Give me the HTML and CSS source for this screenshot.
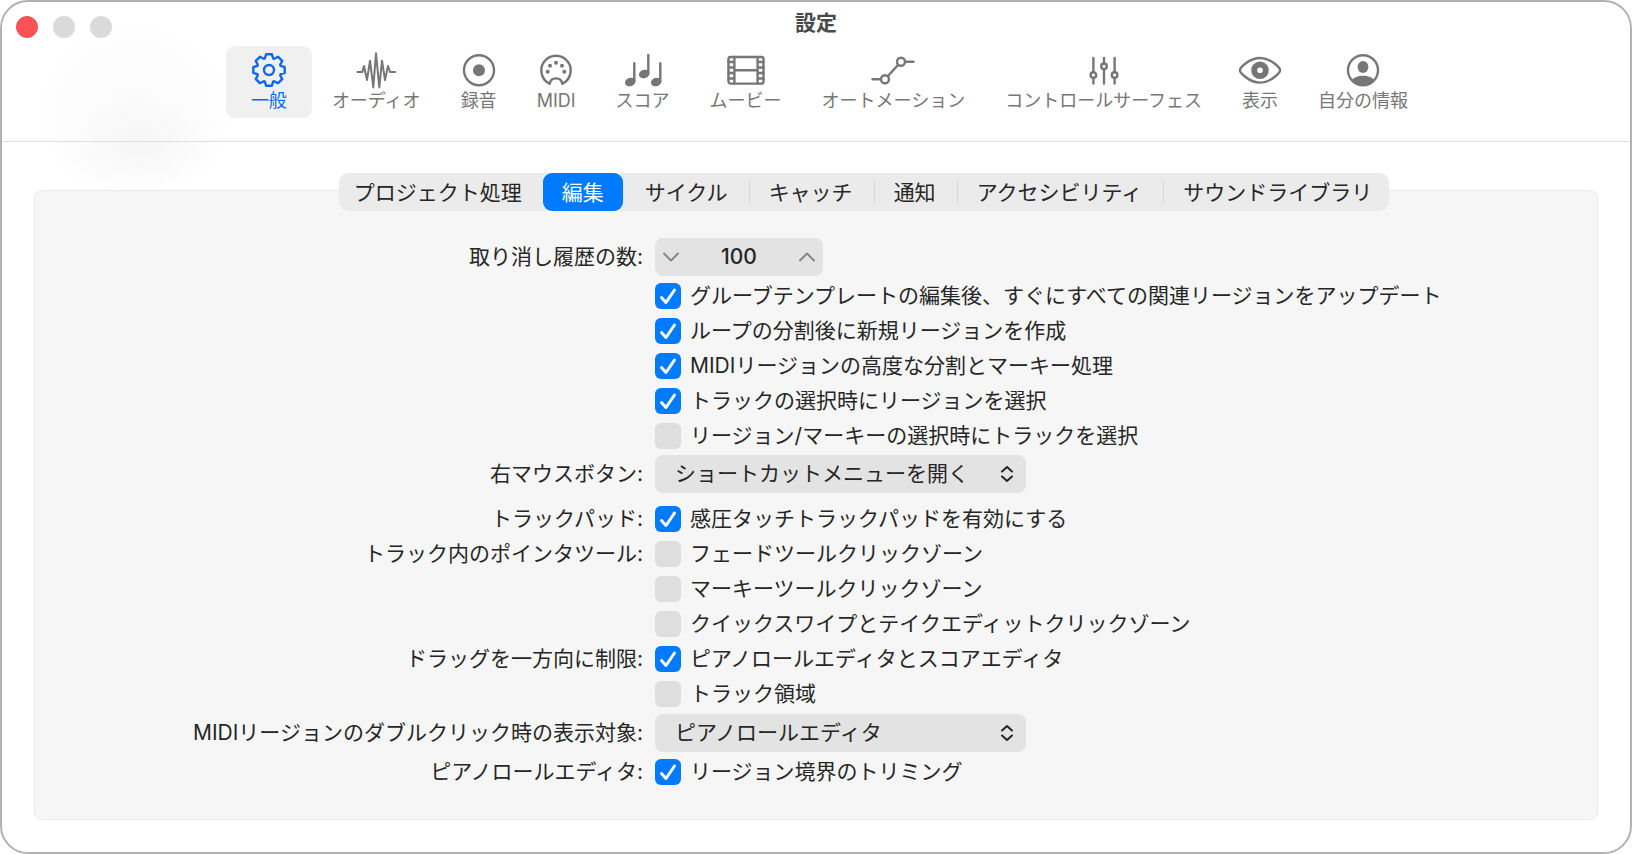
FILE: index.html
```html
<!DOCTYPE html>
<html lang="ja">
<head>
  <meta charset="utf-8">
  <title>設定</title>
  <link rel="stylesheet" href="styles.css">
</head>
<body>
  <div class="window">
    <header class="titlebar">
      <div class="lights">
        <button type="button" class="light close" aria-label="閉じる"></button>
        <button type="button" class="light" aria-label="しまう"></button>
        <button type="button" class="light" aria-label="拡大"></button>
      </div>
      <h1>設定</h1>
    </header>

    <nav class="toolbar">
      <button type="button" class="tool selected">
        <svg viewBox="0 0 44 40">
          <g transform="translate(22 20)">
            <path d="M-4.2-11.6L-2.9-15.7H2.9L4.2-11.6L5.2-11.2L9.1-13.2L13.2-9.1L11.2-5.2L11.6-4.2L15.7-2.9V2.9L11.6 4.2L11.2 5.2L13.2 9.1L9.1 13.2L5.2 11.2L4.2 11.6L2.9 15.7H-2.9L-4.2 11.6L-5.2 11.2L-9.1 13.2L-13.2 9.1L-11.2 5.2L-11.6 4.2L-15.7 2.9V-2.9L-11.6-4.2L-11.2-5.2L-13.2-9.1L-9.1-13.2L-5.2-11.2Z"/>
            <circle r="5"/>
          </g>
        </svg>
        <span>一般</span>
      </button>
      <button type="button" class="tool">
        <svg viewBox="0 0 44 40"><path class="thin" d="M3.4 22H8.3L10 16L13 30L16 10.7L19.3 37.3L22 3.3L25.3 37.3L28 10.7L31 30L34 16L36 22H41"/></svg>
        <span>オーディオ</span>
      </button>
      <button type="button" class="tool">
        <svg viewBox="0 0 44 40"><circle cx="22" cy="20.3" r="15"/><circle class="fill" cx="22" cy="20.3" r="6"/></svg>
        <span>録音</span>
      </button>
      <button type="button" class="tool">
        <svg viewBox="0 0 44 40">
          <path d="M15.8 33.8A14.7 14.7 0 1 1 28.2 33.8C27.2 26.6 16.8 26.6 15.8 33.8Z"/>
          <g class="fill"><circle cx="13.7" cy="21.7" r="2"/><circle cx="16" cy="15.7" r="2"/><circle cx="22" cy="12.7" r="2"/><circle cx="28" cy="15.7" r="2"/><circle cx="30.3" cy="21.7" r="2"/></g>
        </svg>
        <span>MIDI</span>
      </button>
      <button type="button" class="tool">
        <svg viewBox="0 0 44 40">
          <path d="M13.3 13.3V31M27.3 5V23M39.3 13.3V31"/>
          <g class="fill"><ellipse cx="9.2" cy="32" rx="5.4" ry="4.2" transform="rotate(-20 9.2 32)"/><ellipse cx="23.2" cy="24" rx="5.4" ry="4.2" transform="rotate(-20 23.2 24)"/><ellipse cx="35.2" cy="32" rx="5.4" ry="4.2" transform="rotate(-20 35.2 32)"/></g>
        </svg>
        <span>スコア</span>
      </button>
      <button type="button" class="tool">
        <svg viewBox="0 0 44 40">
          <rect x="4.5" y="7" width="35" height="26.6" rx="2"/>
          <path d="M10.4 7V33.6M33.6 7V33.6M10.4 20.3H33.6M4.5 12H10.4M4.5 17.5H10.4M4.5 23H10.4M4.5 28.5H10.4M33.6 12H39.5M33.6 17.5H39.5M33.6 23H39.5M33.6 28.5H39.5"/>
        </svg>
        <span>ムービー</span>
      </button>
      <button type="button" class="tool">
        <svg viewBox="0 0 44 40"><path d="M1.5 29.3H10M34 11.7H42.5M16.8 26.2L27.2 14.8"/><circle cx="14" cy="29.3" r="4"/><circle cx="30" cy="11.7" r="4"/></svg>
        <span>オートメーション</span>
      </button>
      <button type="button" class="tool">
        <svg viewBox="0 0 44 40"><path d="M11.4 8V22M11.4 28V33.5M22 8V13.3M22 19.3V33.5M32.6 8V22M32.6 28V33.5"/><circle cx="11.4" cy="25" r="2.8"/><circle cx="22" cy="16.3" r="2.8"/><circle cx="32.6" cy="25" r="2.8"/></svg>
        <span>コントロールサーフェス</span>
      </button>
      <button type="button" class="tool">
        <svg viewBox="0 0 44 40"><path d="M1.9 20.3C1.9 18 11 8 22 8S42.1 18 42.1 20.3S33 32.6 22 32.6S1.9 22.6 1.9 20.3Z"/><circle class="pupil" cx="22" cy="20.3" r="5.8"/></svg>
        <span>表示</span>
      </button>
      <button type="button" class="tool">
        <svg viewBox="0 0 44 40"><circle cx="22" cy="20.3" r="15"/><g class="fill"><ellipse cx="22" cy="17" rx="5.4" ry="6"/><path d="M10.5 30.5C14 24 30 24 33.5 30.5C28 37 16 37 10.5 30.5Z"/></g></svg>
        <span>自分の情報</span>
      </button>
    </nav>

    <main>
      <div class="tabs">
        <button type="button">プロジェクト処理</button>
        <button type="button" class="active">編集</button>
        <button type="button">サイクル</button>
        <button type="button">キャッチ</button>
        <button type="button">通知</button>
        <button type="button">アクセシビリティ</button>
        <button type="button">サウンドライブラリ</button>
      </div>

      <form class="panel">
        <div class="row tall">
          <label class="name" for="undo">取り消し履歴の数:</label>
          <div class="stepper">
            <button type="button" aria-label="減らす"><svg viewBox="0 0 16 10"><path d="M1 1.5L8 8.5L15 1.5"/></svg></button>
            <input type="text" id="undo" value="100">
            <button type="button" aria-label="増やす"><svg viewBox="0 0 16 10"><path d="M1 8.5L8 1.5L15 8.5"/></svg></button>
          </div>
        </div>

        <div class="row">
          <span class="name"></span>
          <div class="checks">
            <label><input type="checkbox" checked>グルーブテンプレートの編集後、すぐにすべての関連リージョンをアップデート</label>
            <label><input type="checkbox" checked>ループの分割後に新規リージョンを作成</label>
            <label><input type="checkbox" checked>MIDIリージョンの高度な分割とマーキー処理</label>
            <label><input type="checkbox" checked>トラックの選択時にリージョンを選択</label>
            <label><input type="checkbox">リージョン/マーキーの選択時にトラックを選択</label>
          </div>
        </div>

        <div class="row tall">
          <label class="name" for="rightButton">右マウスボタン:</label>
          <div class="popup">
            <select id="rightButton"><option>ショートカットメニューを開く</option></select>
            <svg viewBox="0 0 14 18"><path d="M2 6.5L7 2L12 6.5M2 11.5L7 16L12 11.5"/></svg>
          </div>
        </div>

        <div class="section">
          <div class="row">
            <span class="name">トラックパッド:</span>
            <div class="checks">
              <label><input type="checkbox" checked>感圧タッチトラックパッドを有効にする</label>
            </div>
          </div>
          <div class="row">
            <span class="name">トラック内のポインタツール:</span>
            <div class="checks">
              <label><input type="checkbox">フェードツールクリックゾーン</label>
              <label><input type="checkbox">マーキーツールクリックゾーン</label>
              <label><input type="checkbox">クイックスワイプとテイクエディットクリックゾーン</label>
            </div>
          </div>
          <div class="row">
            <span class="name">ドラッグを一方向に制限:</span>
            <div class="checks">
              <label><input type="checkbox" checked>ピアノロールエディタとスコアエディタ</label>
              <label><input type="checkbox">トラック領域</label>
            </div>
          </div>
        </div>

        <div class="row tall">
          <label class="name" for="doubleClick">MIDIリージョンのダブルクリック時の表示対象:</label>
          <div class="popup">
            <select id="doubleClick"><option>ピアノロールエディタ</option></select>
            <svg viewBox="0 0 14 18"><path d="M2 6.5L7 2L12 6.5M2 11.5L7 16L12 11.5"/></svg>
          </div>
        </div>

        <div class="row">
          <span class="name">ピアノロールエディタ:</span>
          <div class="checks">
            <label><input type="checkbox" checked>リージョン境界のトリミング</label>
          </div>
        </div>
      </form>
    </main>
  </div>
</body>
</html>
```
FILE: styles.css
```css
* {
  box-sizing: border-box;
}

body {
  margin: 0;
  background-color: white;
  color: #262626;
  font-family: Inter, "Noto Sans CJK JP", sans-serif;
  font-size: 21px;
  line-height: 35px;
}

button,
input,
select {
  font: inherit;
  color: inherit;
  margin: 0;
  padding: 0;
  border: none;
  background: none;
}

svg {
  display: block;
  fill: none;
  stroke: currentColor;
  stroke-width: 2;
  stroke-linecap: round;
  stroke-linejoin: round;
}

.window {
  min-height: 100vh;
  margin-right: 1px;
  border: 2px solid #b2b2b2;
  border-radius: 28px;
  background:
    radial-gradient(ellipse 80px 44px at 138px 142px, #f6f6f6, transparent) no-repeat,
    radial-gradient(ellipse 110px 100px at 132px 110px, #fafafa, white) no-repeat;
}

/* title bar */
.titlebar {
  display: grid;
  grid-template-columns: 1fr auto 1fr;
  height: 44px;
}

.titlebar h1 {
  margin: 0;
  padding-top: 4px;
  font-size: 21px;
  line-height: 34px;
  font-weight: bold;
  color: #4a4a4a;
}

.lights {
  display: flex;
  gap: 15px;
  padding: 14px;
}

.light {
  width: 22px;
  height: 22px;
  border-radius: 50%;
  background-color: #dadada;
}

.light.close {
  background-color: #ff5257;
  border: 1px solid #f5464c;
}

/* toolbar */
.toolbar {
  display: flex;
  justify-content: center;
  padding: 0 0 23px 22px;
  border-bottom: 1px solid #dfdfdf;
}

.tool {
  display: flex;
  flex-direction: column;
  align-items: center;
  gap: 1px;
  padding: 4px 20px 7px;
  border-radius: 9px;
  color: #767676;
  font-size: 18px;
  line-height: 20px;
  white-space: nowrap;
}

.tool svg {
  width: 44px;
  height: 40px;
  margin: 0 -10px;
  stroke-width: 2.4;
}

.tool.selected {
  padding: 4px 25px 7px;
  background-color: #f0f0f0;
  color: #0a68f0;
}

.tool .fill {
  fill: currentColor;
  stroke: none;
}

.tool .thin {
  stroke-width: 2;
}

.tool .pupil {
  stroke-width: 6;
}

/* tabs */
main {
  padding: 31px 32px 32px;
}

.tabs {
  position: relative;
  display: flex;
  width: max-content;
  margin: 0 auto -21px;
  left: 48px;
  border-radius: 9px;
  background-color: #ebebeb;
}

.tabs button {
  position: relative;
  height: 38px;
  padding: 0 21px 0 20px;
}

.tabs button:first-child {
  padding-left: 15px;
}

.tabs button:last-child {
  padding-right: 17px;
}

.tabs .active {
  margin-right: 2px;
  padding: 0 19px;
  border-radius: 9px;
  background-color: #007aff;
  color: white;
}

.tabs button:nth-child(n+4)::before {
  content: "";
  position: absolute;
  left: 0;
  top: 8px;
  width: 1px;
  height: 22px;
  background-color: #d6d6d6;
}

/* settings */
.panel {
  display: flex;
  flex-direction: column;
  gap: 2px;
  padding: 47px 3px 30px 0;
  border: 1px solid #ebebeb;
  border-radius: 8px;
  background-color: #f6f6f6;
}

.row {
  display: grid;
  grid-template-columns: 39% 1fr;
  column-gap: 12px;
  white-space: nowrap;
}

.row.tall {
  line-height: 38px;
}

.name {
  text-align: right;
}

.section {
  margin: 6px 0 1px;
}

.checks label {
  display: flex;
  align-items: center;
  gap: 9px;
  width: max-content;
}

input[type="checkbox"] {
  appearance: none;
  width: 26px;
  height: 26px;
  border-radius: 6px;
  background-color: #dedede;
}

input[type="checkbox"]:checked {
  background: #007aff url("data:image/svg+xml,%3Csvg xmlns='http://www.w3.org/2000/svg' viewBox='0 0 26 26'%3E%3Cpath d='M6.5 14.5L11 19.5L19.5 7' fill='none' stroke='white' stroke-width='3' stroke-linecap='round' stroke-linejoin='round'/%3E%3C/svg%3E");
}

.stepper {
  display: flex;
  width: 168px;
  height: 38px;
  border-radius: 8px;
  background-color: #e3e3e3;
}

.stepper button {
  padding: 0 8px;
  color: #858585;
}

.stepper svg {
  width: 16px;
  height: 10px;
}

.stepper input {
  flex: 1;
  min-width: 0;
  text-align: center;
  font-weight: 500;
}

.popup {
  position: relative;
  width: 371px;
}

.popup select {
  display: block;
  appearance: none;
  width: 100%;
  height: 38px;
  padding: 0 40px 0 20px;
  border-radius: 8px;
  background-color: #e3e3e3;
}

.popup svg {
  position: absolute;
  right: 12px;
  top: 10px;
  width: 14px;
  height: 18px;
  pointer-events: none;
}
```
